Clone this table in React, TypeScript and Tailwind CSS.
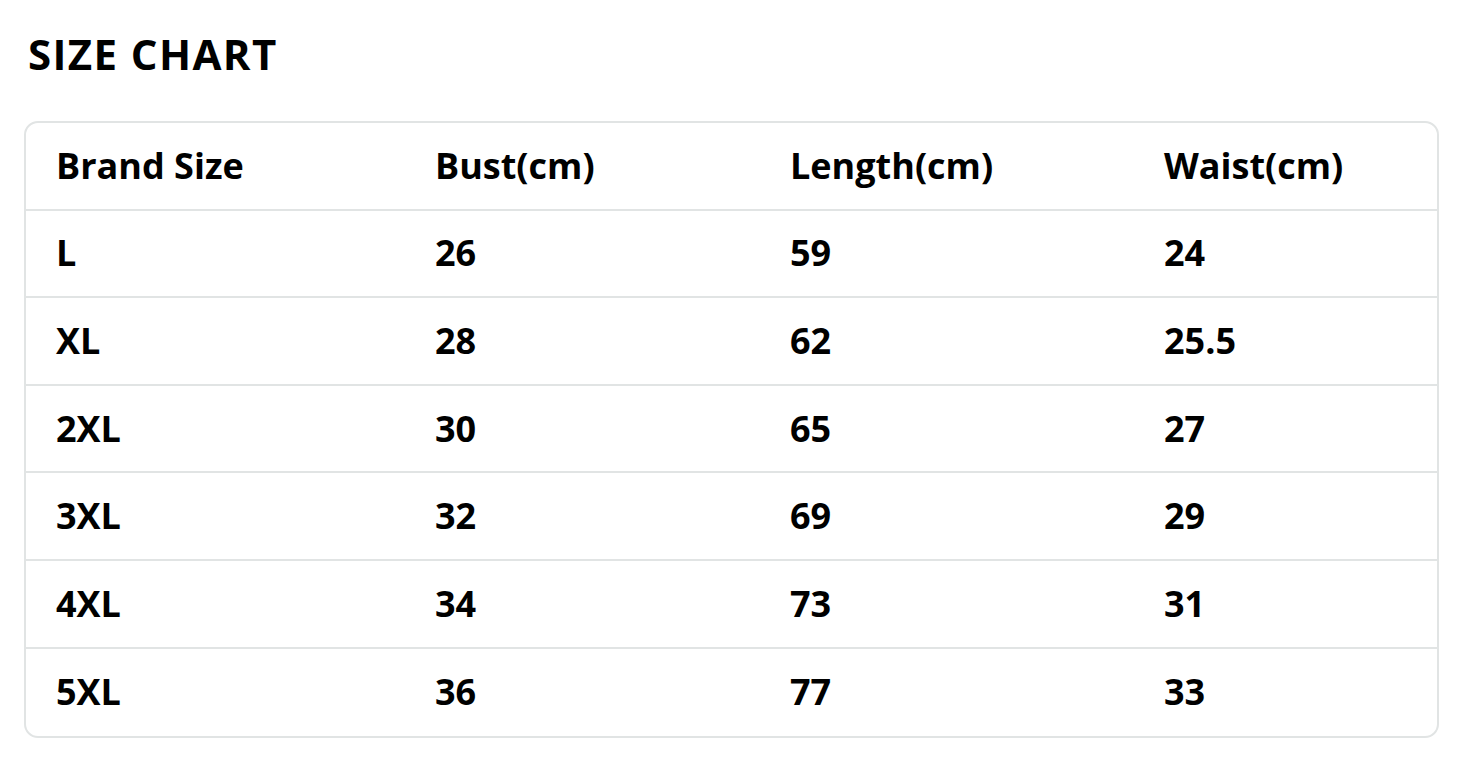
const headers = ["Brand Size", "Bust(cm)", "Length(cm)", "Waist(cm)"];

const rows = [
  ["L", "26", "59", "24"],
  ["XL", "28", "62", "25.5"],
  ["2XL", "30", "65", "27"],
  ["3XL", "32", "69", "29"],
  ["4XL", "34", "73", "31"],
  ["5XL", "36", "77", "33"],
];

function Row({ cells, last }: { cells: string[]; last?: boolean }) {
  return (
    <div
      className={`grid h-[87.6px] grid-cols-[379px_355px_374px_1fr] items-center ${
        last ? "" : "border-b-2 border-[#e1e4e4]"
      }`}
    >
      {cells.map((c, i) => (
        <div key={i} className="pl-[30px] text-[36px] leading-none text-black">
          {c}
        </div>
      ))}
    </div>
  );
}

export default function App() {
  return (
    <div
      className="h-[769px] w-[1464px] bg-white pt-[26px] font-bold"
      style={{ fontFamily: '"Open Sans", sans-serif' }}
    >
      <h1 className="ml-[28px] text-[42px] leading-[56px] tracking-[1.4px] text-black">
        SIZE CHART
      </h1>
      <div className="ml-[24px] mt-[39px] w-[1415px] overflow-hidden rounded-[14px] border-2 border-[#e1e4e4]">
        <Row cells={headers} />
        {rows.map((r, i) => (
          <Row key={r[0]} cells={r} last={i === rows.length - 1} />
        ))}
      </div>
    </div>
  );
}
